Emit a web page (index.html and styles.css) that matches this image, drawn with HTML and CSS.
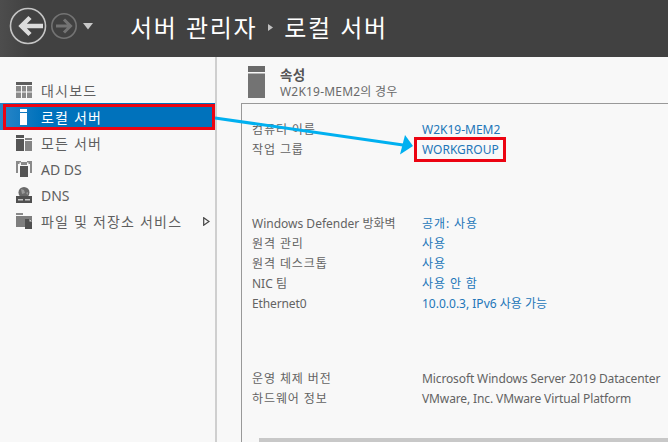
FILE: index.html
```html
<!DOCTYPE html>
<html lang="ko">
<head>
<meta charset="utf-8">
<title>서버 관리자</title>
<link rel="stylesheet" href="styles.css">
</head>
<body>
<div class="app">
  <header class="topbar">
    <div class="nav">
      <svg class="nav-icons" width="80" height="46" viewBox="0 0 80 46">
        <circle cx="28" cy="26" r="17.500" fill="none" stroke="#c4c4c4" stroke-width="1.600"/>
        <path d="M21 26h22M30 17.500l-8.500 8.500 8.500 8.500" fill="none" stroke="#dcdcdc" stroke-width="4.500"/>
        <circle cx="64" cy="26" r="12.200" fill="none" stroke="#737373" stroke-width="1.600"/>
        <path d="M56 26h14M64 19.500l6.500 6.500-6.500 6.500" fill="none" stroke="#737373" stroke-width="3"/>
      </svg>
      <svg class="nav-caret" width="10" height="7" viewBox="0 0 10 7"><path d="M0 0h10l-5 6.500z" fill="#c8c8c8"/></svg>
    </div>
    <h1 class="crumbs"><span>서버 관리자</span><svg class="crumb-sep" width="5" height="7" viewBox="0 0 5 7"><path d="M0 0l5 3.500-5 3.500z" fill="#c0c0c0"/></svg><span>로컬 서버</span></h1>
  </header>
  <div class="body">
    <nav class="sidebar">
      <div class="item">
        <svg class="ico" width="16" height="16" viewBox="0 0 16 16"><path d="M0 0h16v3H0z" fill="#5d5d5d"/><path d="M0 4h5v5.500H0zM6 4h4v5.500H6zM11 4h5v5.500h-5zM0 10.500h5V16H0zM6 10.500h4V16H6zM11 10.500h5V16h-5z" fill="#8a8a8a"/></svg>
        <span>대시보드</span>
      </div>
      <div class="item active">
        <svg class="ico" width="16" height="16" viewBox="0 0 16 16"><path d="M4 0h7v3H4zM4 4h7v12H4z" fill="#fff"/></svg>
        <span>로컬 서버</span>
      </div>
      <div class="item">
        <svg class="ico" width="16" height="16" viewBox="0 0 16 16"><path d="M0 0h8v3H0zM0 4h8v12H0z" fill="#555"/><path d="M9 3h7v2H9zM9 6h7v10H9z" fill="#848484"/></svg>
        <span>모든 서버</span>
      </div>
      <div class="item">
        <svg class="ico" width="16" height="16" viewBox="0 0 16 16"><path d="M0 0h5v1.500H3.500V3H2v9H0zM11 0h5v12h-2V3h-1.500V1.500H11z" fill="#8a8a8a"/><path d="M5 1h6v3H5z" fill="#8a8a8a"/><path d="M4 5h8v11H4z" fill="#555"/></svg>
        <span class="latin">AD DS</span>
      </div>
      <div class="item">
        <svg class="ico" width="16" height="16" viewBox="0 0 16 16"><circle cx="8" cy="5.500" r="5.500" fill="#6a6a6a"/><path d="M5 2l3 1 1 3-3 1zM10 6l2-1v3z" fill="#9a9a9a"/><path d="M0 9h16v7H0z" fill="#505050"/><path d="M2 12h5v1.500H2zM9 12h5v1.500H9z" fill="#c4c4c4"/></svg>
        <span class="latin">DNS</span>
      </div>
      <div class="item">
        <svg class="ico" width="16" height="16" viewBox="0 0 16 16"><path d="M0 0h7v2H0z" fill="#8a8a8a"/><path d="M0 3h16v11H0z" fill="#7e7e7e"/><path d="M9 6h5l2 2v8H9z" fill="#4f4f4f"/><path d="M13.500 6l2.500 2.500h-2.500z" fill="#ddd"/></svg>
        <span>파일 및 저장소 서비스</span>
        <svg class="expand" width="7" height="9" viewBox="0 0 7 9"><path d="M.7.800l5.300 3.700-5.300 3.700z" fill="none" stroke="#444" stroke-width="1.200"/></svg>
      </div>
    </nav>
    <main class="content">
      <div class="head">
        <svg class="head-ico" width="17" height="32" viewBox="0 0 17 32"><path d="M0 0h17v6H0z" fill="#6a6a6a"/><path d="M0 7.500h17V32H0z" fill="#737373"/></svg>
        <div class="head-text">
          <div class="head-title">속성</div>
          <div class="head-sub">W2K19-MEM2의 경우</div>
        </div>
      </div>
      <section class="panel">
        <div class="group g1">
          <div class="row"><span class="k ko">컴퓨터 이름</span><span class="v link">W2K19-MEM2</span></div>
          <div class="row"><span class="k ko">작업 그룹</span><span class="v link">WORKGROUP</span></div>
        </div>
        <div class="group g2">
          <div class="row"><span class="k">Windows Defender 방화벽</span><span class="v link ko">공개: 사용</span></div>
          <div class="row"><span class="k ko">원격 관리</span><span class="v link ko">사용</span></div>
          <div class="row"><span class="k ko">원격 데스크톱</span><span class="v link ko">사용</span></div>
          <div class="row"><span class="k">NIC 팀</span><span class="v link ko">사용 안 함</span></div>
          <div class="row"><span class="k en">Ethernet0</span><span class="v link">10.0.0.3, IPv6 사용 가능</span></div>
        </div>
        <div class="group g3">
          <div class="row"><span class="k ko">운영 체제 버전</span><span class="v en">Microsoft Windows Server 2019 Datacenter</span></div>
          <div class="row"><span class="k ko">하드웨어 정보</span><span class="v en">VMware, Inc. VMware Virtual Platform</span></div>
        </div>
        <div class="scrollbar"></div>
      </section>
    </main>
  </div>
  <div class="mark mark-nav"></div>
  <div class="mark mark-wg"></div>
  <svg class="arrow" width="668" height="442" viewBox="0 0 668 442"><path d="M215 118L403 145" stroke="#00b0f0" stroke-width="3" fill="none"/><path d="M413 146L400 154.500 405 135z" fill="#00b0f0"/></svg>
</div>
</body>
</html>
```
FILE: styles.css
```css
* { box-sizing: border-box; }
html, body { margin: 0; height: 100%; }
body {
  font-family: "Noto Sans", "Noto Sans CJK KR", sans-serif;
  font-size: 12px;
  color: #636363;
  background: #f8f8f8;
  overflow: hidden;
}
.app { position: relative; width: 668px; height: 442px; overflow: hidden; display: flex; flex-direction: column; }
.topbar {
  height: 57px;
  flex: none;
  background: linear-gradient(90deg, #4d4d4d 0, #414141 30px);
  display: flex;
  align-items: center;
}
.nav { width: 130px; height: 57px; flex: none; position: relative; }
.nav-icons { display: block; }
.nav-caret { position: absolute; left: 83px; top: 23px; }
.crumbs {
  margin: 0 0 3px;
  font: 400 24px/30px "Noto Sans CJK KR", sans-serif;
  color: #fff;
  display: flex;
  align-items: center;
  letter-spacing: 1.7px;
}
.crumb-sep { margin: 0 11px 0 11px; }
.body { flex: 1; display: flex; min-height: 0; }
.sidebar {
  width: 217px;
  flex: none;
  border-right: 2px solid #cfcfcf;
  padding-top: 20px;
}
.item {
  height: 26px;
  display: flex;
  align-items: center;
  padding-left: 16px;
  color: #5f5f5f;
  font-size: 14px;
  letter-spacing: 1.2px;
}
.item span { margin-left: 9px; }
.item .latin { letter-spacing: 0; }
.item .ico { flex: none; }
.item.active {
  height: 27px;
  background: linear-gradient(90deg, #2a86c8 0, #0072bc 40px);
  color: #fff;
}
.expand { margin-left: auto; margin-right: 5px; }
.content { flex: 1; padding: 0 0 0 24px; display: flex; flex-direction: column; min-width: 0; }
.head { height: 46px; display: flex; padding-top: 9px; padding-left: 7px; flex: none; }
.head-text { margin-left: 15px; }
.head-title { font-weight: 700; font-size: 13.500px; line-height: 18px; color: #555; letter-spacing: 0.3px; }
.head-sub { font-size: 12px; line-height: 16px; color: #6a6a6a; letter-spacing: 0.2px; }
.panel {
  flex: 1;
  border-left: 1px solid #999;
  border-top: 1px solid #999;
  padding: 15px 0 0 10px;
  position: relative;
}
.row { display: flex; height: 20px; align-items: center; white-space: nowrap; }
.k { width: 170px; flex: none; }
.v { color: #636363; }
.link { color: #2276b9; }
.ko { letter-spacing: 0.9px; }
.en { letter-spacing: -0.12px; }
.g2 { margin-top: 54px; }
.g3 { margin-top: 55px; }
.scrollbar { position: absolute; left: 17px; right: 0; bottom: 0; height: 4px; background: #c8c8c8; }
.mark { position: absolute; border: 3px solid #ec0412; }
.mark-nav { left: 3px; top: 104px; width: 212px; height: 26px; }
.mark-wg { left: 414px; top: 137px; width: 92px; height: 25px; }
.arrow { position: absolute; left: 0; top: 0; pointer-events: none; }
```
